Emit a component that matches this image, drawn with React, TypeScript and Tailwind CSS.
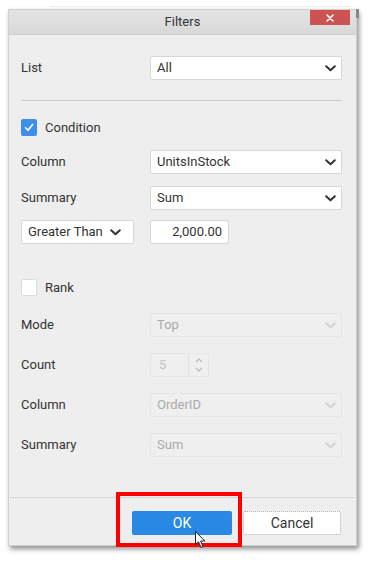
import React from "react";

const Chevron = ({ disabled = false }: { disabled?: boolean }) => (
  <svg width="11" height="7" viewBox="0 0 11 7" className="shrink-0">
    <path
      d="M1.2 1.2 L5.5 5.3 L9.8 1.2"
      fill="none"
      stroke={disabled ? "#d4d4d4" : "#333333"}
      strokeWidth="2"
      strokeLinecap="round"
      strokeLinejoin="round"
    />
  </svg>
);

const Select = ({ value, disabled = false }: { value: string; disabled?: boolean }) => (
  <div
    className={
      disabled
        ? "flex h-full w-[192px] items-center justify-between rounded-[2px] border border-[#e6e6e6] bg-[#efefef] pl-[6px] pr-[5px] text-[#aaaaaa]"
        : "flex h-full w-[192px] items-center justify-between rounded-[2px] border border-[#d6d6d6] bg-white pl-[6px] pr-[5px] text-[#333333]"
    }
  >
    <span>{value}</span>
    <Chevron disabled={disabled} />
  </div>
);

const Row = ({ label, children, mt }: { label: string; children: React.ReactNode; mt: string }) => (
  <div className={`flex h-[24px] items-center ${mt}`}>
    <div className="w-[129px] text-[#333333]">{label}</div>
    {children}
  </div>
);

export default function App() {
  return (
    <div
      className="relative h-[563px] w-[372px] overflow-hidden bg-white text-[13px]"
      style={{ fontFamily: "Roboto, 'Noto Sans', sans-serif" }}
    >
      <div className="absolute left-[50px] top-[6px] h-px w-[300px] bg-[#ececec]" />
      <div className="absolute left-[356px] top-[9px] h-[9px] w-[3px] bg-[#888888]" />
      <div className="ml-[8px] mt-[9px] flex h-[537px] w-[349px] flex-col border border-[#d0d0d0] bg-[#eeeeee] shadow-[2px_3px_5px_rgba(0,0,0,0.45)]">
        {/* header */}
        <div className="relative flex h-[25px] shrink-0 items-center justify-center bg-gradient-to-b from-[#e4e4e4] to-[#d8d8d8] border-b border-[#cfcfcf]">
          <span className="text-[13px] text-[#333333]">Filters</span>
          <div className="absolute right-[6px] top-0 flex h-[15px] w-[40px] items-center justify-center bg-[#cd5353]">
            <svg width="8" height="8" viewBox="0 0 8 8">
              <path d="M1 1 L7 7 M7 1 L1 7" stroke="white" strokeWidth="1.6" strokeLinecap="round" />
            </svg>
          </div>
        </div>
        {/* body */}
        <div className="flex flex-1 flex-col pl-[12px] pr-[14px]">
          <Row label="List" mt="mt-[21px]">
            <Select value="All" />
          </Row>
          <div className="mt-[20px] h-px bg-[#c9c9c9]" />
          <div className="mt-[18px] flex h-[17px] items-center">
            <div className="flex h-[17px] w-[16px] items-center justify-center rounded-[2px] bg-[#3d8fea]">
              <svg width="10" height="9" viewBox="0 0 10 9">
                <path d="M1.5 4.8 L4 7.3 L8.6 1.5" fill="none" stroke="white" strokeWidth="1.6" strokeLinecap="round" strokeLinejoin="round" />
              </svg>
            </div>
            <span className="ml-[8px] text-[#333333]">Condition</span>
          </div>
          <Row label="Column" mt="mt-[14px]">
            <Select value="UnitsInStock" />
          </Row>
          <Row label="Summary" mt="mt-[12px]">
            <Select value="Sum" />
          </Row>
          <div className="mt-[10px] flex h-[24px] items-center">
            <div className="flex h-full w-[113px] items-center justify-between rounded-[2px] border border-[#d6d6d6] bg-white pl-[6px] pr-[12px] text-[#333333]">
              <span>Greater Than</span>
              <Chevron />
            </div>
            <div className="ml-[16px] flex h-full w-[79px] items-center justify-end rounded-[2px] border border-[#d6d6d6] bg-white pr-[6px] text-[#333333]">
              2,000.00
            </div>
          </div>
          <div className="mt-[35px] flex h-[17px] items-center">
            <div className="h-[17px] w-[16px] rounded-[2px] border border-[#dcdcdc] bg-white" />
            <span className="ml-[8px] text-[#333333]">Rank</span>
          </div>
          <Row label="Mode" mt="mt-[17px]">
            <Select value="Top" disabled />
          </Row>
          <Row label="Count" mt="mt-[16px]">
            <div className="flex h-full w-[59px] rounded-[2px] border border-[#e6e6e6] bg-[#efefef]">
              <div className="flex flex-1 items-center pl-[8px] text-[#c4c4c4]">5</div>
              <div className="flex w-[20px] flex-col items-center justify-center gap-[4px] border-l border-[#e2e2e2]">
                <svg width="8" height="5" viewBox="0 0 8 5">
                  <path d="M1 4 L4 1 L7 4" fill="none" stroke="#b8b8b8" strokeWidth="1.1" />
                </svg>
                <svg width="8" height="5" viewBox="0 0 8 5">
                  <path d="M1 1 L4 4 L7 1" fill="none" stroke="#b8b8b8" strokeWidth="1.1" />
                </svg>
              </div>
            </div>
          </Row>
          <Row label="Column" mt="mt-[16px]">
            <Select value="OrderID" disabled />
          </Row>
          <Row label="Summary" mt="mt-[16px]">
            <Select value="Sum" disabled />
          </Row>
        </div>
        {/* footer */}
        <div className="mx-[1px] flex h-[48px] shrink-0 items-start justify-end border-t border-[#d6d6d6] pr-[14px] pt-[13px]">
          <div className="flex h-[24px] w-[100px] items-center justify-center rounded-[2px] bg-[#2a89e4] text-[14px] text-white">
            OK
          </div>
          <div className="ml-[11px] flex h-[24px] w-[98px] items-center justify-center rounded-[2px] border border-dotted border-[#aaaaaa] bg-white text-[14px] text-[#333333]">
            Cancel
          </div>
        </div>
      </div>
      {/* red highlight */}
      <div className="absolute left-[116px] top-[492px] h-[55px] w-[126px] border-[4px] border-[#ff0000]" />
      {/* cursor */}
      <svg className="absolute left-[195px] top-[531px]" width="13" height="18" viewBox="0 0 13 18">
        <path d="M0.5 0.5 L0.5 13.5 L3.5 10.8 L6 16.5 L8 15.6 L5.6 10 L9.8 10 Z" fill="white" stroke="#222" strokeWidth="1" strokeLinejoin="round" />
      </svg>
    </div>
  );
}
